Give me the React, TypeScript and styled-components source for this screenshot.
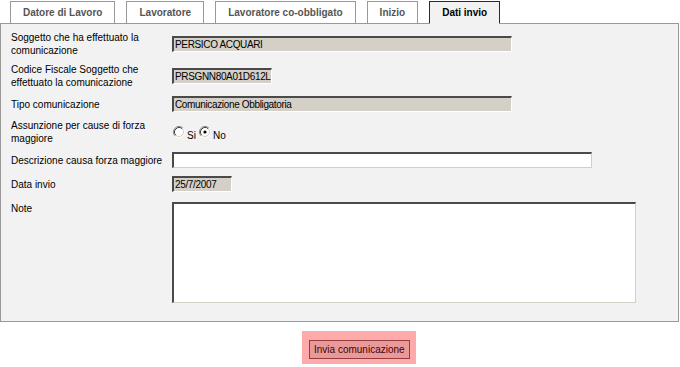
import styled, { createGlobalStyle } from 'styled-components';

const GlobalStyle = createGlobalStyle`
  body {
    margin: 0;
    background: #ffffff;
    font-family: "Liberation Sans", Arial, sans-serif;
    font-size: 10px;
    color: #000000;
  }
`;

const tabs = ['Datore di Lavoro', 'Lavoratore', 'Lavoratore co-obbligato', 'Inizio', 'Dati invio'];

function Radio({ checked }: { checked?: boolean }) {
  return (
    <svg width="12" height="12" viewBox="0 0 12 12">
      <circle cx="6" cy="6" r="4.5" fill="#ffffff" />
      <path d="M2.11 9.89 A5.5 5.5 0 0 1 9.89 2.11" fill="none" stroke="#808080" />
      <path d="M9.89 2.11 A5.5 5.5 0 0 1 2.11 9.89" fill="none" stroke="#ffffff" />
      <path d="M2.82 9.18 A4.5 4.5 0 0 1 9.18 2.82" fill="none" stroke="#404040" />
      <path d="M9.18 2.82 A4.5 4.5 0 0 1 2.82 9.18" fill="none" stroke="#d4d0c8" />
      {checked && <circle cx="6" cy="6" r="1.6" fill="#000000" />}
    </svg>
  );
}

function App() {
  return (
    <>
      <GlobalStyle />
      <Page>
        <TabBar>
          {tabs.map((t) => (
            <Tab key={t} $active={t === 'Dati invio'}>
              {t}
            </Tab>
          ))}
        </TabBar>
        <Panel>
          <Row>
            <Label>Soggetto che ha effettuato la comunicazione</Label>
            <Field $w={340} $ro readOnly value="PERSICO ACQUARI" />
          </Row>
          <Row>
            <Label>Codice Fiscale Soggetto che effettuato la comunicazione</Label>
            <Field $w={100} $ro readOnly value="PRSGNN80A01D612L" />
          </Row>
          <Row>
            <Label>Tipo comunicazione</Label>
            <Field $w={340} $ro readOnly value="Comunicazione Obbligatoria" />
          </Row>
          <Row>
            <Label>Assunzione per cause di forza maggiore</Label>
            <Options>
              <Option>
                <Radio />
                <span>Si</span>
              </Option>
              <Option>
                <Radio checked />
                <span>No</span>
              </Option>
            </Options>
          </Row>
          <Row>
            <Label>Descrizione causa forza maggiore</Label>
            <Field $w={420} defaultValue="" />
          </Row>
          <Row>
            <Label>Data invio</Label>
            <Field $w={60} $ro readOnly value="25/7/2007" />
          </Row>
          <Row $top>
            <Label>Note</Label>
            <Notes />
          </Row>
        </Panel>
        <Footer>
          <Highlight>
            <SendButton>Invia comunicazione</SendButton>
          </Highlight>
        </Footer>
      </Page>
    </>
  );
}
export default App;

const Page = styled.div`
  padding-top: 1px;
`;

const TabBar = styled.div`
  display: flex;
  gap: 11px;
  padding-left: 10px;
  position: relative;
  z-index: 1;
`;

const Tab = styled.div<{ $active?: boolean }>`
  height: 23px;
  box-sizing: border-box;
  margin-bottom: -1px;
  padding: 0 12px;
  border: 1px solid ${(p) => (p.$active ? '#003366' : '#999999')};
  border-bottom-color: ${(p) => (p.$active ? '#f2f2f2' : '#999999')};
  background: ${(p) => (p.$active ? '#f2f2f2' : '#ffffff')};
  color: ${(p) => (p.$active ? '#000000' : '#555555')};
  font-weight: bold;
  font-size: 10px;
  line-height: 21px;
  white-space: nowrap;
`;

const Panel = styled.div`
  margin-right: 1px;
  padding: 4px 0 15px 10px;
  border: 1px solid #999999;
  background: #f2f2f2;
`;

const Row = styled.div<{ $top?: boolean }>`
  display: grid;
  grid-template-columns: 161px 1fr;
  align-items: ${(p) => (p.$top ? 'start' : 'center')};
  min-height: 24px;
  box-sizing: border-box;
  padding: ${(p) => (p.$top ? '6px 0 3px' : '3px 0')};
`;

const Label = styled.div`
  padding-right: 6px;
  line-height: 13px;
`;

const Field = styled.input<{ $w: number; $ro?: boolean }>`
  width: ${(p) => p.$w}px;
  height: 16px;
  box-sizing: border-box;
  margin: 0;
  padding: 0 0 0 1px;
  border-style: solid;
  border-width: 2px 1px 1px 2px;
  border-color: #4a4a4a ${(p) => (p.$ro ? '#ffffff' : '#d4d0c8')}
    ${(p) => (p.$ro ? '#ffffff' : '#d4d0c8')} #4a4a4a;
  background: ${(p) => (p.$ro ? '#d4d0c8' : '#ffffff')};
  font: 10px "Liberation Sans", Arial, sans-serif;
  letter-spacing: -0.35px;
  color: #000000;
  outline: none;
`;

const Notes = styled.textarea`
  width: 464px;
  height: 101px;
  box-sizing: border-box;
  margin: 0;
  padding: 1px;
  resize: none;
  border-style: solid;
  border-width: 2px 1px 1px 2px;
  border-color: #4a4a4a #d4d0c8 #d4d0c8 #4a4a4a;
  background: #ffffff;
  font: 10px "Liberation Sans", Arial, sans-serif;
  outline: none;
`;

const Options = styled.div`
  display: flex;
  gap: 3px;
  padding-left: 1px;
`;

const Option = styled.label`
  display: flex;
  align-items: center;
  gap: 2px;

  span {
    padding-top: 6px;
    line-height: 13px;
  }
`;

const Footer = styled.div`
  display: flex;
  padding-left: 302px;
  margin-top: 9px;
`;

const Highlight = styled.div`
  padding: 9px 6px 5px 7px;
  background: #ffaaaa;
`;

const SendButton = styled.button`
  height: 19px;
  margin: 0;
  padding: 0 4px;
  border: 1px solid #963c3c;
  background: #e89a9b;
  color: #4d0000;
  font: 10px "Liberation Sans", Arial, sans-serif;
  line-height: 17px;
`;
